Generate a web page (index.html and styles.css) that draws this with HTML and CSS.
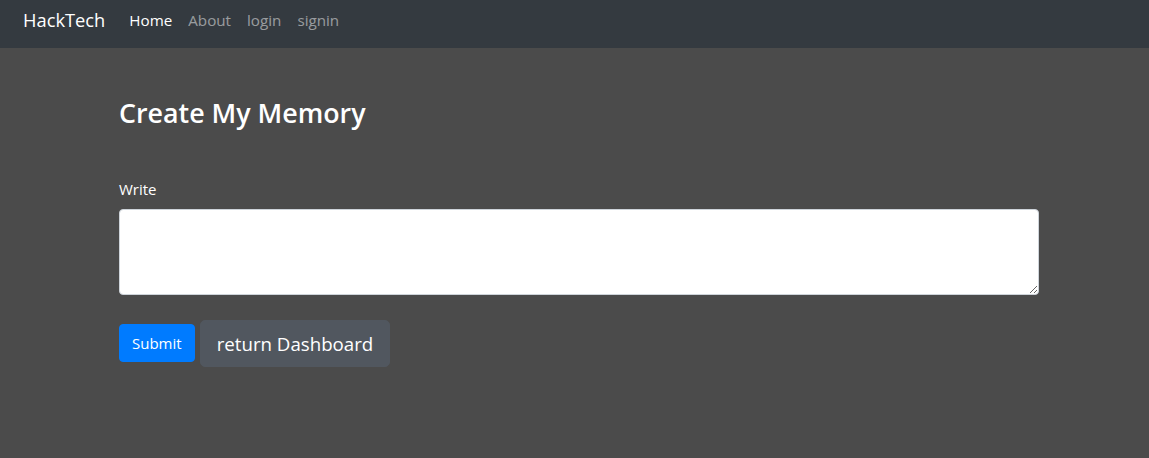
FILE: index.html
```html
<!DOCTYPE html>
<html lang="en">
<head>
<meta charset="utf-8">
<title>HackTech</title>
<link rel="stylesheet" href="styles.css">
</head>
<body>
<nav class="navbar">
  <a class="brand" href="#">HackTech</a>
  <ul class="nav">
    <li><a class="nav-link active" href="#">Home</a></li>
    <li><a class="nav-link" href="#">About</a></li>
    <li><a class="nav-link" href="#">login</a></li>
    <li><a class="nav-link" href="#">signin</a></li>
  </ul>
</nav>
<main class="container">
  <h3 class="title">Create My Memory</h3>
  <form class="form">
    <div class="form-group">
      <label class="label" for="write">Write</label>
      <textarea id="write" class="textarea" rows="3"></textarea>
    </div>
    <div class="actions">
      <button type="button" class="btn btn-primary">Submit</button>
      <button type="button" class="btn btn-lg btn-dark">return Dashboard</button>
    </div>
  </form>
</main>
</body>
</html>
```
FILE: styles.css
```css
* { box-sizing: border-box; }
html, body { margin: 0; padding: 0; }
body {
  background: #4b4b4b;
  font-family: "Open Sans", "Noto Sans", sans-serif;
  font-size: 16px;
  line-height: 1.5;
  color: #fff;
  height: 458px;
}
.navbar {
  background: #343a40;
  height: 48px;
  display: flex;
  align-items: flex-start;
  padding: 5px 16px 0 23px;
}
.brand {
  color: #fff;
  text-decoration: none;
  font-size: 18.3px;
  margin-right: 24px;
  line-height: 30px;
}
.nav {
  list-style: none;
  display: flex;
  margin: 0;
  padding: 0;
}
.nav-link {
  display: block;
  padding: 0 8px;
  line-height: 30px;
  color: rgba(255,255,255,0.5);
  text-decoration: none;
  font-size: 15.2px;
}
.nav li:first-child .nav-link { padding-left: 0; }
.nav-link.active { color: #fff; }
.container {
  width: 920px;
  margin-left: 119px;
  padding-top: 49px;
}
.title {
  margin: 0 0 49px;
  font-size: 26.8px;
  font-weight: 600;
  line-height: 1.2;
}
.form-group { margin-bottom: 25px; }
.label {
  display: block;
  font-size: 15px;
  margin-bottom: 8px;
  color: #fff;
}
.textarea {
  display: block;
  width: 100%;
  height: 86px;
  border: 1px solid #ced4da;
  border-radius: 4px;
  background: #fff;
  font: inherit;
  padding: 6px 12px;
}
.actions { display: flex; align-items: center; gap: 5px; }
.btn {
  font-family: inherit;
  border: 1px solid transparent;
  color: #fff;
  cursor: pointer;
}
.btn-primary {
  background: #007bff;
  border-color: #007bff;
  font-size: 15px;
  height: 38px;
  padding: 0 12px;
  border-radius: 4px;
}
.btn-dark {
  background: #51575f;
  border-color: #51575f;
  font-size: 18.7px;
  height: 47px;
  padding: 0 16px;
  border-radius: 5px;
}
```
